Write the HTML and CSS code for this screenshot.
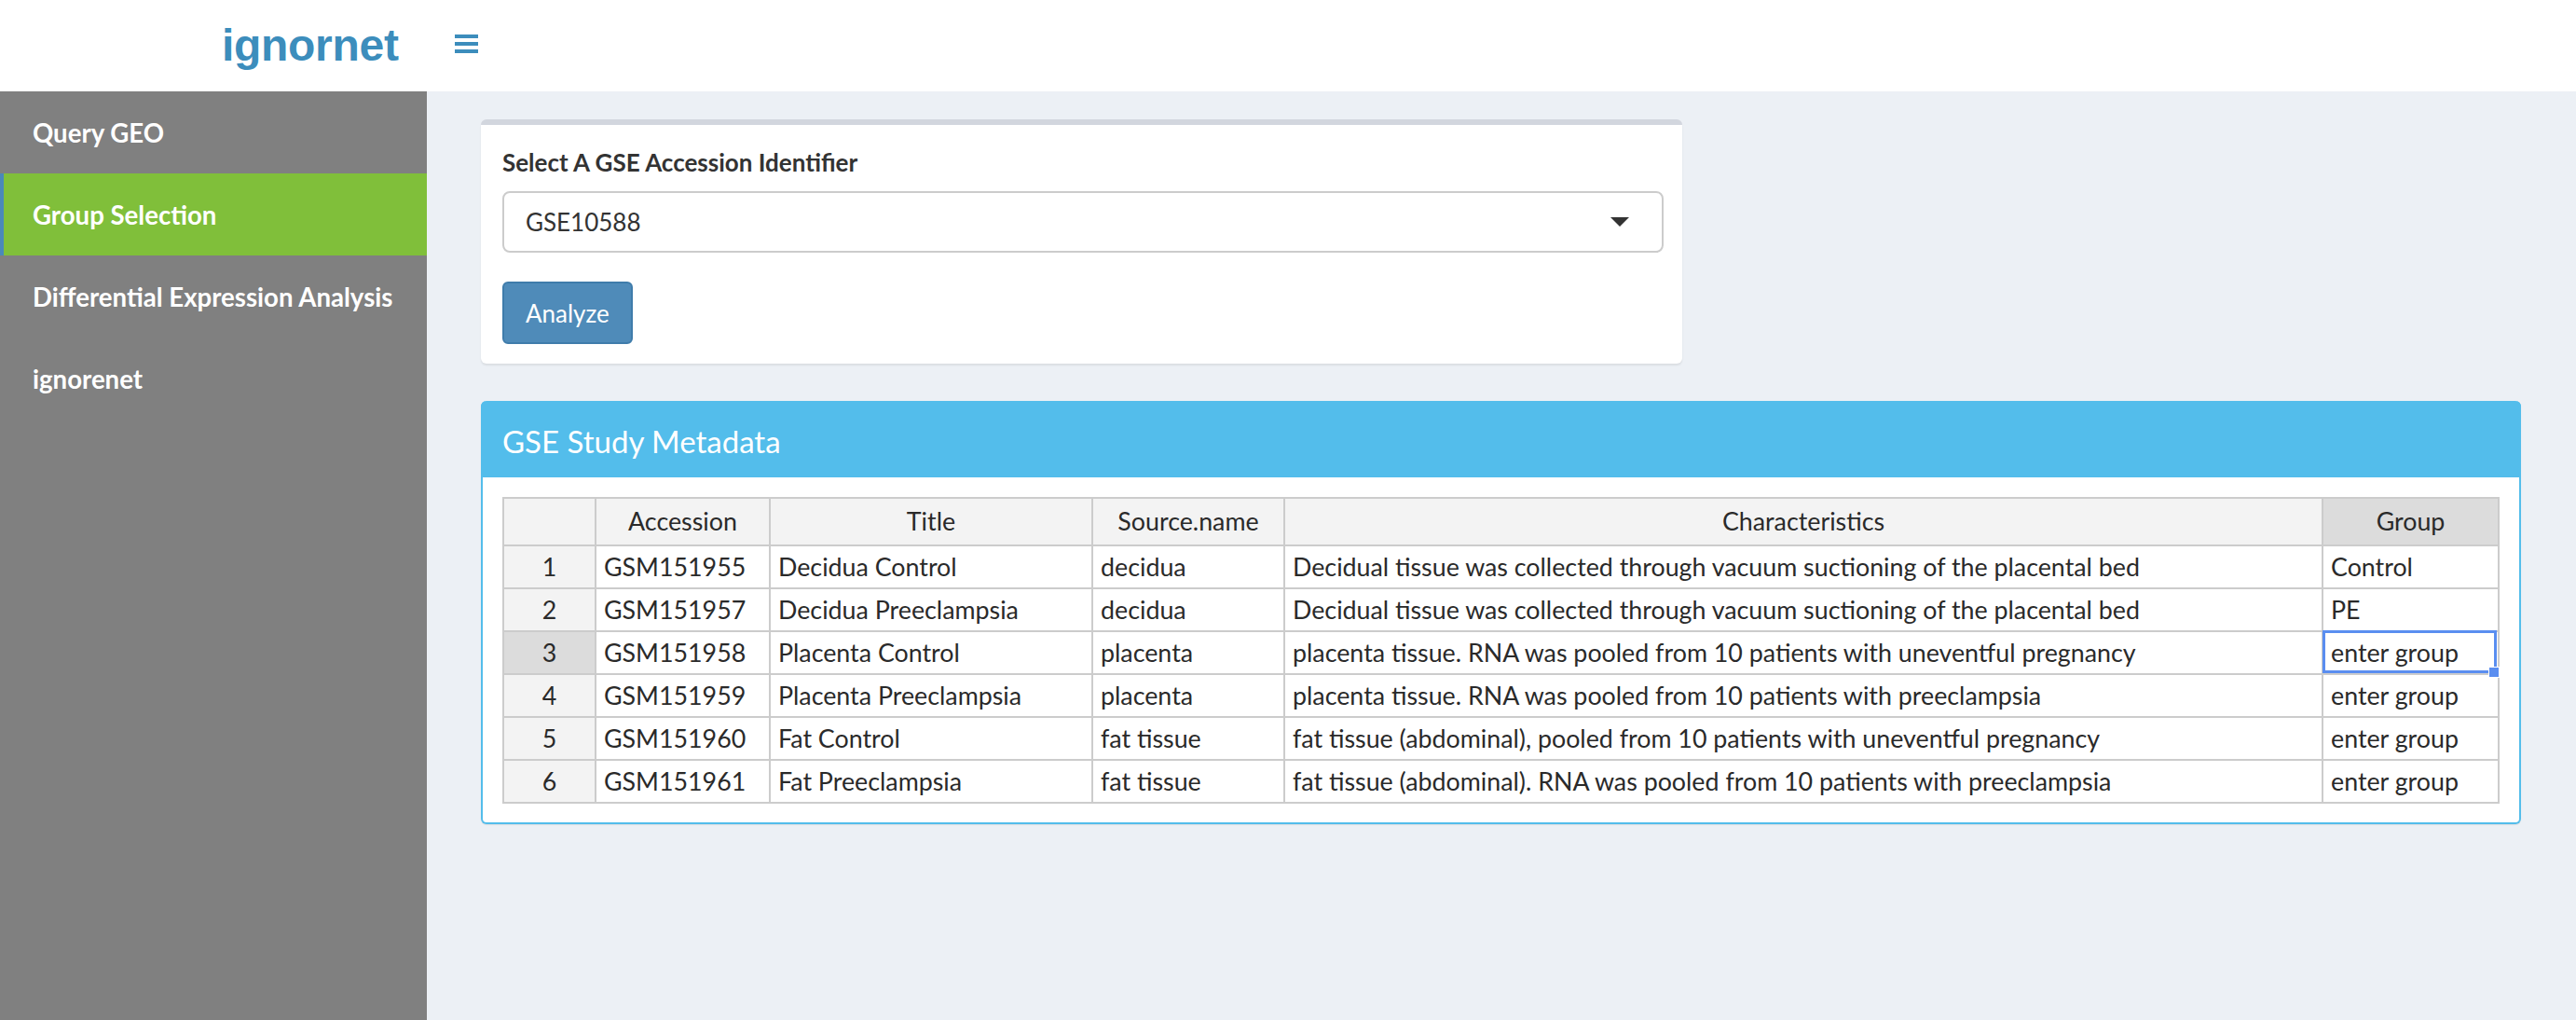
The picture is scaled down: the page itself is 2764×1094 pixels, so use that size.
FILE: index.html
```html
<!DOCTYPE html>
<html lang="en">
<head>
<meta charset="utf-8">
<title>ignornet</title>
<link rel="stylesheet" href="styles.css">
</head>
<body>
<header class="topbar">
  <div class="logo">ignornet</div>
  <a class="toggle" aria-label="Toggle navigation">
    <svg width="25" height="20" viewBox="0 0 25 20"><rect x="0" y="0" width="25" height="4" fill="#3c8dbc"/><rect x="0" y="8" width="25" height="4" fill="#3c8dbc"/><rect x="0" y="16" width="25" height="4" fill="#3c8dbc"/></svg>
  </a>
</header>
<div class="layout">
  <aside class="sidebar">
    <ul class="menu">
      <li class="menu-item">Query GEO</li>
      <li class="menu-item active">Group Selection</li>
      <li class="menu-item">Differential Expression Analysis</li>
      <li class="menu-item">ignorenet</li>
    </ul>
  </aside>
  <main class="content">
    <section class="card">
      <label class="field-label">Select A GSE Accession Identifier</label>
      <div class="select">
        <span class="select-value">GSE10588</span>
        <span class="caret"></span>
      </div>
      <button class="btn">Analyze</button>
    </section>
    <section class="box">
      <div class="box-header">GSE Study Metadata</div>
      <div class="box-body">
        <table class="grid">
          <colgroup>
            <col class="c-rh"><col class="c-acc"><col class="c-title"><col class="c-src"><col class="c-char"><col class="c-grp">
          </colgroup>
          <thead>
            <tr><th></th><th>Accession</th><th>Title</th><th>Source.name</th><th>Characteristics</th><th class="hl">Group</th></tr>
          </thead>
          <tbody>
            <tr><th>1</th><td>GSM151955</td><td>Decidua Control</td><td>decidua</td><td>Decidual tissue was collected through vacuum suctioning of the placental bed</td><td>Control</td></tr>
            <tr><th>2</th><td>GSM151957</td><td>Decidua Preeclampsia</td><td>decidua</td><td>Decidual tissue was collected through vacuum suctioning of the placental bed</td><td>PE</td></tr>
            <tr><th class="hl">3</th><td>GSM151958</td><td>Placenta Control</td><td>placenta</td><td>placenta tissue. RNA was pooled from 10 patients with uneventful pregnancy</td><td class="sel">enter group</td></tr>
            <tr><th>4</th><td>GSM151959</td><td>Placenta Preeclampsia</td><td>placenta</td><td>placenta tissue. RNA was pooled from 10 patients with preeclampsia</td><td>enter group</td></tr>
            <tr><th>5</th><td>GSM151960</td><td>Fat Control</td><td>fat tissue</td><td>fat tissue (abdominal), pooled from 10 patients with uneventful pregnancy</td><td>enter group</td></tr>
            <tr><th>6</th><td>GSM151961</td><td>Fat Preeclampsia</td><td>fat tissue</td><td>fat tissue (abdominal). RNA was pooled from 10 patients with preeclampsia</td><td>enter group</td></tr>
          </tbody>
        </table>
      </div>
    </section>
  </main>
</div>
</body>
</html>
```
FILE: styles.css
```css
* { box-sizing: border-box; }
html, body { height: 100%; }
body {
  margin: 0;
  background: #ecf0f5;
  font-family: Lato, "Open Sans", sans-serif;
  color: #333;
}
.topbar {
  display: flex;
  align-items: center;
  height: 98px;
  background: #fff;
}
.logo {
  width: 458px;
  flex: none;
  padding-left: 238px;
  font-family: "Liberation Sans", Arial, sans-serif;
  font-weight: 700;
  font-size: 48px;
  line-height: 98px;
  color: #3c8dbc;
  letter-spacing: -0.3px;
}
.toggle {
  display: flex;
  margin-left: 30px;
  margin-bottom: 4px;
}
.layout {
  display: flex;
  min-height: 996px;
}
.sidebar {
  width: 458px;
  flex: none;
  background: #808080;
}
.menu { list-style: none; margin: 0; padding: 0; }
.menu-item {
  height: 88px;
  display: flex;
  align-items: center;
  padding-left: 35px;
  color: #fff;
  font-weight: 700;
  font-size: 27.6px;
}
.menu-item.active {
  background: #80bf3a;
  border-left: 4px solid #4a89b9;
  padding-left: 31px;
}
.content {
  flex: 1;
  padding: 30px 59px 30px 58px;
}
.card {
  width: 1289px;
  background: #fff;
  border-top: 6px solid #d2d6de;
  border-radius: 6px;
  box-shadow: 0 2px 2px rgba(0,0,0,0.08);
  padding: 20px 20px 21px 23px;
  display: flex;
  flex-direction: column;
  align-items: flex-start;
}
.field-label {
  font-weight: 700;
  font-size: 26px;
  line-height: 40px;
  color: #333;
}
.select {
  margin-top: 11px;
  width: 100%;
  height: 66px;
  border: 2px solid #ccc;
  border-radius: 8px;
  display: flex;
  align-items: center;
  justify-content: space-between;
  padding: 0 35px 0 23px;
  font-size: 26px;
  color: #333;
}
.caret {
  width: 0;
  height: 0;
  border-left: 10px solid transparent;
  border-right: 10px solid transparent;
  border-top: 10px solid #333;
}
.btn {
  margin-top: 31px;
  width: 140px;
  height: 67px;
  background: #4f8bb9;
  border: 2px solid #3f7cab;
  border-radius: 6px;
  color: #fff;
  font-family: inherit;
  font-size: 26px;
  text-align: left;
  padding: 0 0 0 23px;
}
.box {
  margin-top: 40px;
  background: #fff;
  border: 2px solid #53bdeb;
  border-top: 0;
  border-radius: 6px;
  box-shadow: 0 1px 1px rgba(0,0,0,0.08);
}
.box-header {
  height: 82px;
  background: #53bdeb;
  border-radius: 6px 6px 0 0;
  margin: 0 -2px;
  display: flex;
  align-items: center;
  padding: 4px 0 0 23px;
  color: #fff;
  font-size: 33px;
}
.box-body {
  padding: 21px 21px 20px 21px;
}
.grid {
  border-collapse: collapse;
  table-layout: fixed;
  width: 2141px;
  font-size: 26.8px;
  color: #2a2a2a;
}
.c-rh { width: 99px; }
.c-acc { width: 187px; }
.c-title { width: 346px; }
.c-src { width: 206px; }
.c-char { width: 1114px; }
.c-grp { width: 189px; }
.grid th, .grid td {
  border: 2px solid #ccc;
  padding: 0 8px;
  line-height: 44px;
  white-space: nowrap;
  overflow: hidden;
  text-align: left;
  font-weight: 400;
}
.grid thead th {
  background: #f3f3f3;
  text-align: center;
  line-height: 49px;
}
.grid tbody th {
  background: #f3f3f3;
  text-align: center;
}
.grid th.hl { background: #dcdcdc; }
.grid td { background: #fff; }
.grid td.sel { position: relative; overflow: visible; }
.grid td.sel::after {
  content: "";
  position: absolute;
  top: -2px;
  left: -1px;
  right: 1px;
  bottom: 0;
  border: 3px solid #5a8ef0;
  pointer-events: none;
}
.grid td.sel::before {
  content: "";
  position: absolute;
  right: -2px;
  bottom: -5px;
  width: 10px;
  height: 10px;
  background: #5a8ef0;
  border: 1px solid #fff;
  z-index: 1;
}
```
